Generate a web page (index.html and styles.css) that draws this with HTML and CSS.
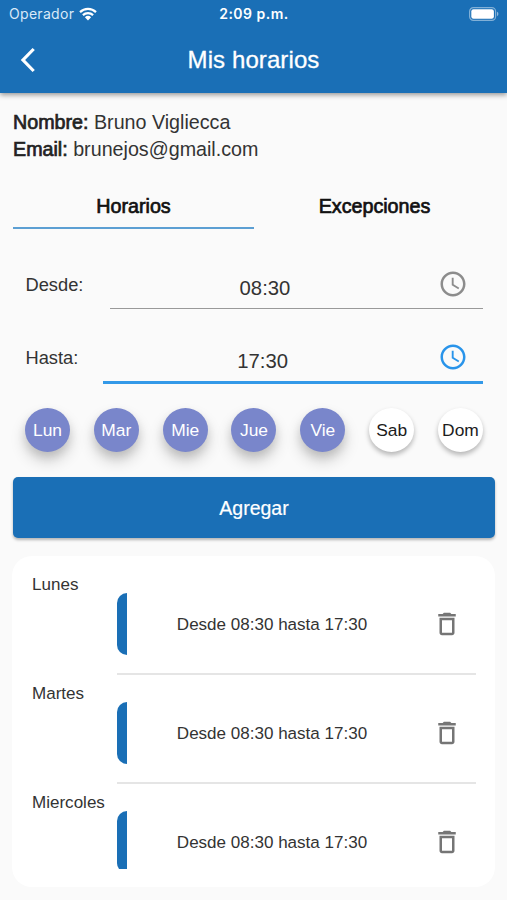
FILE: index.html
```html
<!DOCTYPE html>
<html lang="es">
<head>
<meta charset="utf-8">
<title>Mis horarios</title>
<link rel="stylesheet" href="styles.css">
</head>
<body>
<svg class="symbols" aria-hidden="true">
  <symbol id="clock" viewBox="0 0 24 24"><path d="M11.99 2C6.47 2 2 6.48 2 12s4.47 10 9.99 10C17.52 22 22 17.52 22 12S17.52 2 11.99 2zM12 20c-4.42 0-8-3.58-8-8s3.58-8 8-8 8 3.58 8 8-3.58 8-8 8zm.5-13H11v6l5.25 3.15.75-1.23-4.5-2.67z"/></symbol>
  <symbol id="trash" viewBox="0 0 24 24"><path d="M6 19c0 1.1.9 2 2 2h8c1.100 0 2-.9 2-2V7H6v12zM8 9h8v10H8V9zm7.500-5l-1-1h-5l-1 1H5v2h14V4z"/></symbol>
</svg>
<header class="header">
  <div class="status">
    <div class="carrier"><span>Operador</span>
      <svg class="wifi" viewBox="0 0 18 14"><path d="M1 5.100a11.500 11.500 0 0 1 16 0M3.900 8.100a7.400 7.400 0 0 1 10.200 0" fill="none" stroke="#fff" stroke-width="2.200"/><path d="M5.900 10.300a4.500 4.500 0 0 1 6.200 0L9 13.500z" fill="#fff"/></svg>
    </div>
    <time class="time">2:09 p.m.</time>
    <svg class="battery" viewBox="0 0 30 14"><rect x=".6" y=".6" width="26" height="12.800" rx="3.800" fill="none" stroke="#fff" stroke-opacity=".45" stroke-width="1.200"/><rect x="2.300" y="2.300" width="22.600" height="9.400" rx="2.200" fill="#fff"/><path d="M28 4.800a2.400 2.400 0 0 1 0 4.400z" fill="#fff" fill-opacity=".5"/></svg>
  </div>
  <div class="appbar">
    <svg class="back" viewBox="0 0 16 26"><path d="M13.700 2L3 13l10.700 11" fill="none" stroke="#fff" stroke-width="3.200"/></svg>
    <h1 class="title">Mis horarios</h1>
  </div>
</header>
<main class="content">
  <section class="profile">
    <p><b>Nombre:</b> Bruno Vigliecca</p>
    <p><b>Email:</b> brunejos@gmail.com</p>
  </section>
  <nav class="tabs"><a class="tab active">Horarios</a><a class="tab">Excepciones</a></nav>
  <div class="field">
    <label>Desde:</label>
    <div class="input"><span>08:30</span><svg class="clock"><use href="#clock"/></svg></div>
  </div>
  <div class="field focused">
    <label>Hasta:</label>
    <div class="input"><span>17:30</span><svg class="clock"><use href="#clock"/></svg></div>
  </div>
  <div class="days">
    <span class="day on">Lun</span><span class="day on">Mar</span><span class="day on">Mie</span><span class="day on">Jue</span><span class="day on">Vie</span><span class="day">Sab</span><span class="day">Dom</span>
  </div>
  <button class="add">Agregar</button>
  <section class="card">
    <div class="list">
      <div class="row"><span class="name">Lunes</span><div class="slot"><i class="bar"></i><span class="hours">Desde 08:30 hasta 17:30</span><svg class="trash"><use href="#trash"/></svg></div></div>
      <div class="row"><span class="name">Martes</span><div class="slot"><i class="bar"></i><span class="hours">Desde 08:30 hasta 17:30</span><svg class="trash"><use href="#trash"/></svg></div></div>
      <div class="row"><span class="name">Miercoles</span><div class="slot"><i class="bar"></i><span class="hours">Desde 08:30 hasta 17:30</span><svg class="trash"><use href="#trash"/></svg></div></div>
    </div>
  </section>
</main>
</body>
</html>
```
FILE: styles.css
```css
* { box-sizing: border-box; }
body {
  margin: 0;
  height: 900px;
  overflow: hidden;
  background: #fafafa;
  color: #333;
  font-family: "Liberation Sans", Arial, sans-serif;
}
p, h1 { margin: 0; }
svg { display: block; }
.symbols { position: absolute; width: 0; height: 0; }

.header {
  height: 93px;
  background: #1a6fb6;
  color: #fff;
  box-shadow: 0 2px 5px rgba(0, 0, 0, .4);
}
.status {
  display: grid;
  grid-template-columns: 1fr auto 1fr;
  align-items: center;
  height: 27px;
  padding: 0 8px 0 9px;
  font-family: Inter, sans-serif;
  font-size: 14px;
}
.carrier { display: flex; align-items: center; gap: 5px; color: #d9e9f8; letter-spacing: .3px; }
.wifi { width: 18px; height: 14px; }
.time { font-weight: 600; letter-spacing: .5px; }
.battery { width: 30px; height: 14px; justify-self: end; }
.appbar {
  display: grid;
  grid-template-columns: 40px 1fr 40px;
  align-items: center;
  height: 66px;
}
.back { width: 16px; height: 26px; margin-left: 20px; }
.title {
  text-align: center;
  font-size: 24px;
  font-weight: 400;
  letter-spacing: .1px;
  -webkit-text-stroke: .3px;
}

.content { padding: 16px 12px 0 13px; }
.profile { font-size: 19.700px; line-height: 27px; }
.profile b { font-weight: 400; color: #222; -webkit-text-stroke: .7px; }
.tabs { display: grid; grid-template-columns: 241px 241px; height: 45px; margin-top: 21px; }
.tab {
  display: flex;
  align-items: center;
  justify-content: center;
  padding-top: 2px;
  border-bottom: 2px solid transparent;
  color: #111;
  font-size: 19.700px;
  -webkit-text-stroke: .7px;
}
.tab.active { border-color: #5c9fd3; }

.field { display: flex; margin: 26px 12px 0 12.500px; height: 54px; }
.field label { padding-right: 26.500px; font-size: 18.300px; line-height: 59px; }
.input {
  flex: 1;
  display: flex;
  align-items: center;
  border-bottom: 1px solid #999;
  font-size: 20.300px;
}
.input span { flex: 1; padding: 14px 18px 0 0; text-align: center; }
.clock { width: 30px; height: 30px; margin: 4px 15px 0 0; fill: #8c8c8c; }
.field.focused { margin-top: 19px; height: 56px; }
.focused label { padding-right: 25px; }
.focused .input { border-bottom: 3px solid #3399e8; }
.focused .input span { padding-right: 16px; }
.focused .clock { margin-top: 5px; fill: #2994ea; }

.days { display: flex; justify-content: space-between; margin: 24px 12px 0 12px; }
.day {
  display: flex;
  align-items: center;
  justify-content: center;
  width: 45px;
  height: 44px;
  border-radius: 50%;
  background: #fff;
  color: #1c1c1c;
  font-size: 17.400px;
  box-shadow: 0 3px 5px rgba(0, 0, 0, .28);
}
.day.on { background: #7986cb; color: #fff; box-shadow: 0 9px 15px rgba(0, 0, 0, .18), 0 5px 8px rgba(0, 0, 0, .1); }

.add {
  position: relative;
  display: block;
  width: 482px;
  height: 61px;
  margin-top: 25px;
  padding: 2px 0 0;
  border: 0;
  border-radius: 5px;
  background: #1a6fb6;
  color: #fff;
  font: 19.500px "Liberation Sans", sans-serif;
  -webkit-text-stroke: .2px;
  box-shadow: 0 2px 3px rgba(0, 0, 0, .28);
}

.card {
  height: 331px;
  margin: 18px 0 0 -1px;
  padding: 10px 19px 18px 20px;
  border-radius: 20px;
  background: #fff;
}
.list { height: 303px; overflow: hidden; }
.row { display: grid; grid-template-columns: 85px 1fr; height: 109px; font-size: 17.050px; }
.name { padding-top: 9px; line-height: 20px; }
.slot {
  display: flex;
  align-items: center;
  padding-top: 9px;
  border-bottom: 2px solid #e5e5e5;
}
.bar { width: 10px; height: 62px; background: #1a6fb6; border-radius: 10px 0 0 10px; }
.hours { width: 240px; margin: 1px 0 0 25px; text-align: center; }
.trash { width: 30px; height: 30px; margin: 0 0 0 40px; fill: #757575; }
```
